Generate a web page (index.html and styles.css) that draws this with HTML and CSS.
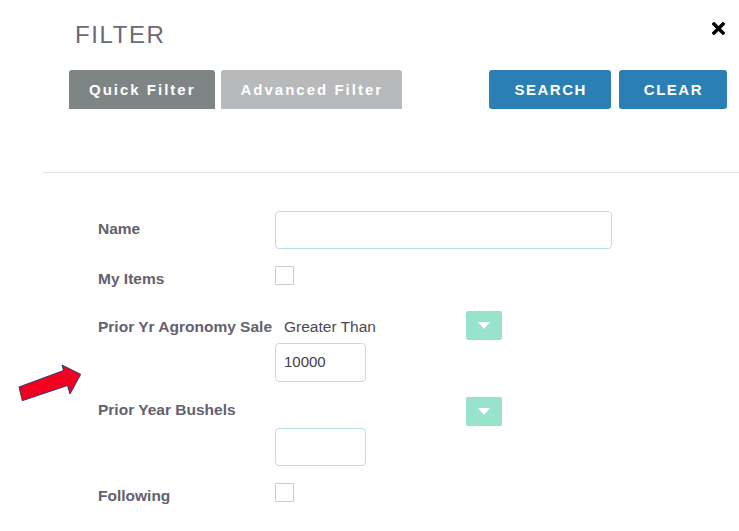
FILE: index.html
```html
<!DOCTYPE html>
<html lang="en">
<head>
<meta charset="utf-8">
<title>Filter</title>
<link rel="stylesheet" href="styles.css">
</head>
<body>
<div class="modal">
  <header class="head">
    <h1 class="title">FILTER</h1>
    <button class="close" type="button" aria-label="Close">
      <svg width="13" height="13" viewBox="0 0 13 13"><path d="M2 2 L11 11 M11 2 L2 11" stroke="#000" stroke-width="3.4" stroke-linecap="square"/></svg>
    </button>
  </header>
  <div class="toolbar">
    <div class="tabs">
      <button class="tab tab-active" type="button">Quick Filter</button>
      <button class="tab" type="button">Advanced Filter</button>
    </div>
    <div class="actions">
      <button class="btn" type="button">SEARCH</button>
      <button class="btn" type="button">CLEAR</button>
    </div>
  </div>
  <hr class="divider">
  <form class="form">
    <div class="row row-name">
      <label class="label">Name</label>
      <input class="field field-wide" type="text">
    </div>
    <div class="row row-check">
      <label class="label label-check">My Items</label>
      <span class="checkbox"></span>
    </div>
    <div class="row row-prior">
      <label class="label label-prior">Prior Yr Agronomy Sale</label>
      <div class="control">
        <div class="select">
          <span class="select-text">Greater Than</span>
          <span class="select-btn"><span class="caret"></span></span>
        </div>
        <div class="field field-small field-prior">10000</div>
      </div>
    </div>
    <div class="row row-bushels">
      <label class="label label-check">Prior Year Bushels</label>
      <div class="control">
        <div class="select">
          <span class="select-text"></span>
          <span class="select-btn"><span class="caret"></span></span>
        </div>
        <div class="field field-small field-bushels"></div>
      </div>
    </div>
    <div class="row row-following">
      <label class="label label-check">Following</label>
      <span class="checkbox"></span>
    </div>
  </form>
  <svg class="arrow" width="70" height="45" viewBox="0 0 70 45">
    <polygon points="4,27 48.5,10.5 47,5 65.7,14.3 55,34 52.5,25.5 7.3,40.7" fill="#f2001f" stroke="#2d3a7c" stroke-width="1" stroke-linejoin="miter"/>
  </svg>
</div>
</body>
</html>
```

FILE: styles.css
```css
* { box-sizing: border-box; }

body {
  margin: 0;
  background: #ffffff;
  font-family: "Liberation Sans", Arial, sans-serif;
}

.modal {
  position: relative;
  width: 739px;
  height: 531px;
  overflow: hidden;
}

.head {
  display: flex;
  justify-content: space-between;
  align-items: flex-start;
  padding: 21px 14px 0 75px;
}

.title {
  margin: 0;
  font-size: 24px;
  line-height: 28px;
  font-weight: normal;
  letter-spacing: 1.6px;
  color: #6b6878;
}

.close {
  margin-top: 1px;
  padding: 0;
  border: 0;
  background: none;
  width: 13px;
  height: 13px;
  display: block;
}

.close svg { display: block; }

.toolbar {
  display: flex;
  justify-content: space-between;
  margin-top: 21px;
  padding: 0 12px 0 69px;
}

.tabs, .actions {
  display: flex;
}

.tabs { gap: 6px; }
.actions { gap: 8px; }

.tab {
  height: 39px;
  padding: 0 19px 0 20px;
  border: 0;
  border-radius: 3px 3px 0 0;
  background: #b8b9ba;
  color: #ffffff;
  font-family: inherit;
  font-size: 15px;
  font-weight: bold;
  letter-spacing: 2px;
}

.tab-active { background: #7f8584; }

.btn {
  height: 39px;
  padding: 0 24px 0 25px;
  border: 0;
  border-radius: 3px;
  background: #2a7fb5;
  color: #ffffff;
  font-family: inherit;
  font-size: 15px;
  font-weight: bold;
  letter-spacing: 1.5px;
}

.divider {
  margin: 63px 0 0 43px;
  height: 0;
  border: 0;
  border-top: 1px solid #e3e3e3;
}

.form {
  padding-left: 98px;
  margin-top: 38px;
}

.row {
  display: flex;
  align-items: flex-start;
}

.label {
  width: 177px;
  flex: none;
  font-size: 15.5px;
  line-height: 18px;
  font-weight: bold;
  color: #64616e;
  margin-top: 9px;
}

.label-check { margin-top: 4px; }
.label-prior { margin-top: 7px; }

.row-check { margin-top: 17px; }
.row-prior { margin-top: 23px; }
.row-bushels { margin-top: 15px; }
.row-following { margin-top: 17px; }

.field {
  height: 38px;
  border: 1px solid #b6dcf2;
  border-radius: 4px;
  background: #fff;
  font-family: inherit;
  font-size: 15px;
  color: #404048;
}

.field-wide { width: 337px; }

.field-small {
  width: 91px;
  padding-left: 8px;
  line-height: 36px;
}

.field-prior { margin-top: 3px; height: 39px; }
.field-bushels { margin-top: 2px; }

.checkbox {
  width: 19px;
  height: 19px;
  border: 1px solid #c8ccd3;
  border-radius: 1px;
  background: #fff;
}

.control {
  display: flex;
  flex-direction: column;
}

.select {
  width: 227px;
  height: 29px;
  display: flex;
  justify-content: space-between;
  align-items: flex-start;
  padding-left: 9px;
}

.select-text {
  margin-top: 7px;
  font-size: 15.5px;
  line-height: 18px;
  color: #4a4955;
}

.select-btn {
  width: 36px;
  height: 29px;
  border-radius: 2px;
  background: #97e3cb;
  display: flex;
  align-items: center;
  justify-content: center;
}

.caret {
  width: 0;
  height: 0;
  border-left: 6px solid transparent;
  border-right: 6px solid transparent;
  border-top: 7px solid #ffffff;
}

.arrow {
  position: absolute;
  left: 15px;
  top: 360px;
}
```
